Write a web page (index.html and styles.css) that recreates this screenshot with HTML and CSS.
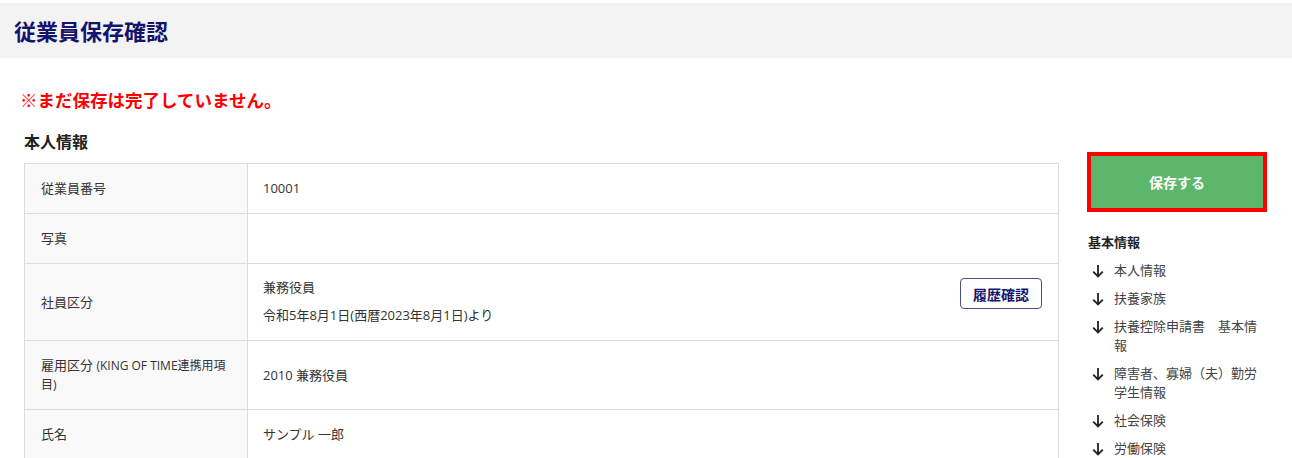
FILE: index.html
```html
<!DOCTYPE html>
<html lang="ja">
<head>
  <meta charset="utf-8">
  <title>従業員保存確認</title>
  <link rel="stylesheet" href="styles.css">
</head>
<body>
  <header class="page-head">
    <h1>従業員保存確認</h1>
  </header>
  <p class="warning">※まだ保存は完了していません。</p>
  <div class="layout">
    <section class="main-col">
      <h2>本人情報</h2>
      <table class="info">
        <tbody>
          <tr>
            <th>従業員番号</th>
            <td>10001</td>
          </tr>
          <tr>
            <th>写真</th>
            <td></td>
          </tr>
          <tr>
            <th>社員区分</th>
            <td>
              <div class="with-btn">
                <div>
                  <p>兼務役員</p>
                  <p class="period">令和5年8月1日(西暦2023年8月1日)より</p>
                </div>
                <button class="history" type="button">履歴確認</button>
              </div>
            </td>
          </tr>
          <tr>
            <th>雇用区分 <small>(KING OF TIME連携用項目)</small></th>
            <td>2010 兼務役員</td>
          </tr>
          <tr>
            <th>氏名</th>
            <td>サンプル 一郎</td>
          </tr>
        </tbody>
      </table>
    </section>
    <aside class="side">
      <button class="save" type="button">保存する</button>
      <h3>基本情報</h3>
      <ul class="toc">
        <li><svg viewBox="0 0 12 14"><path d="M6 1v11.5M1.2 7.6L6 12.5l4.8-4.9"/></svg><span>本人情報</span></li>
        <li><svg viewBox="0 0 12 14"><path d="M6 1v11.5M1.2 7.6L6 12.5l4.8-4.9"/></svg><span>扶養家族</span></li>
        <li><svg viewBox="0 0 12 14"><path d="M6 1v11.5M1.2 7.6L6 12.5l4.8-4.9"/></svg><span>扶養控除申請書　基本情報</span></li>
        <li><svg viewBox="0 0 12 14"><path d="M6 1v11.5M1.2 7.6L6 12.5l4.8-4.9"/></svg><span>障害者、寡婦（夫）勤労学生情報</span></li>
        <li><svg viewBox="0 0 12 14"><path d="M6 1v11.5M1.2 7.6L6 12.5l4.8-4.9"/></svg><span>社会保険</span></li>
        <li><svg viewBox="0 0 12 14"><path d="M6 1v11.5M1.2 7.6L6 12.5l4.8-4.9"/></svg><span>労働保険</span></li>
      </ul>
    </aside>
  </div>
</body>
</html>
```

FILE: styles.css
```css
body {
  margin: 0;
  font-family: "Open Sans", "Noto Sans CJK JP", sans-serif;
  font-size: 13px;
  color: #333;
  background: #fff;
}
.page-head {
  margin-top: 3px;
  height: 55px;
  background: #f3f3f3;
  display: flex;
  align-items: center;
  padding-left: 14px;
}
.page-head h1 {
  margin: 0;
  font-size: 22px;
  line-height: 30px;
  font-weight: bold;
  color: #14146c;
}
.warning {
  margin: 30px 0 0;
  padding-left: 20px;
  font-size: 17.5px;
  line-height: 24px;
  font-weight: bold;
  color: #ff0000;
}
.layout {
  display: flex;
  gap: 28px;
  margin-top: 19px;
  padding: 0 25px 0 24px;
}
.main-col {
  flex: 1;
}
.main-col h2 {
  margin: 0 0 10px;
  font-size: 16px;
  line-height: 22px;
  font-weight: bold;
  color: #222;
}
.info {
  width: 100%;
  border-collapse: collapse;
  border: 1px solid #dcdcdc;
}
.info th,
.info td {
  border: 1px solid #dcdcdc;
  padding: 15px;
  line-height: 19px;
  text-align: left;
  vertical-align: middle;
  font-size: 13px;
  color: #333;
}
.info th {
  width: 190px;
  padding-left: 16px;
  padding-right: 16px;
  background: #f9f9f9;
  font-weight: normal;
}
.info th small {
  font-size: 12px;
}
.info p {
  margin: 0;
}
.info .period {
  margin-top: 9px;
}
.with-btn {
  display: flex;
  justify-content: space-between;
  align-items: flex-start;
  margin-top: -1px;
}
.history {
  height: 31px;
  margin-right: 1px;
  padding: 0 12px;
  border: 1px solid #4c4c8c;
  border-radius: 4px;
  background: #fff;
  font-family: inherit;
  font-size: 14px;
  font-weight: bold;
  color: #16166c;
}
.side {
  width: 180px;
  padding-top: 21px;
}
.save {
  display: block;
  width: 180px;
  height: 60px;
  border: 4px solid #ff0000;
  background: #5cb66c;
  color: #fff;
  font-family: inherit;
  font-size: 14px;
  font-weight: bold;
}
.side h3 {
  margin: 21px 0 0 1px;
  font-size: 13px;
  line-height: 19px;
  font-weight: bold;
  color: #222;
}
.toc {
  list-style: none;
  margin: 0;
  padding: 0;
}
.toc li {
  display: flex;
  align-items: flex-start;
  margin-top: 9px;
  line-height: 19px;
  font-size: 13px;
  color: #444;
}
.toc svg {
  flex: none;
  width: 12px;
  height: 14px;
  margin: 3px 10px 0 5px;
  fill: none;
  stroke: #222;
  stroke-width: 1.8;
}
```
